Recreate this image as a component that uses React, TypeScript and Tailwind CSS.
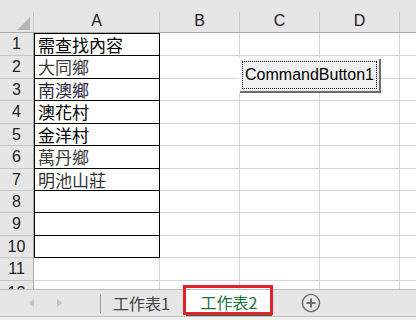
import React from "react";

const rowHeights = [23, 23, 22, 23, 22, 23, 22, 22, 23, 22, 23];
const cellText: Record<number, { t: string; c: string }> = {
  1: { t: "需查找內容", c: "text-[#000]" },
  2: { t: "大同鄉", c: "text-[#3a3a3a]" },
  3: { t: "南澳鄉", c: "text-[#2a2440]" },
  4: { t: "澳花村", c: "text-[#000]" },
  5: { t: "金洋村", c: "text-[#000]" },
  6: { t: "萬丹鄉", c: "text-[#3a3a3a]" },
  7: { t: "明池山莊", c: "text-[#333]" },
};

const cjk = { fontFamily: '"Noto Sans CJK TC", "Noto Sans", sans-serif' };
const lat = { fontFamily: '"Liberation Sans", Arial, sans-serif' };

function Row({ n, h }: { n: number; h: number }) {
  const inA = n <= 10;
  const txt = cellText[n];
  return (
    <div className="flex" style={{ height: h }}>
      <div
        className="w-[34px] shrink-0 bg-[#e6e6e6] border-r border-b border-r-[#ababab] border-b-[#c6c6c6] flex items-center justify-center text-[16px] leading-[18px] text-[#222]"
        style={lat}
      >
        {n}
      </div>
      <div
        className={
          "w-[126px] shrink-0 border-b border-r box-border flex items-center pl-[3px] text-[17px] leading-[18px] " +
          (inA
            ? "border-l border-black border-r-black border-b-black " + (n === 1 ? "border-t border-t-black " : "")
            : "border-l border-l-white border-b-[#d4d4d4] border-r-[#d4d4d4]")
        }
        style={cjk}
      >
        {txt ? <span className={txt.c + " leading-[18px]"}>{txt.t}</span> : null}
      </div>
      <div className="w-[80px] shrink-0 border-r border-b border-[#d4d4d4]" />
      <div className="w-[80px] shrink-0 border-r border-b border-[#d4d4d4]" />
      <div className="w-[80px] shrink-0 border-r border-b border-[#d4d4d4]" />
      <div className="flex-1 border-b border-[#d4d4d4]" />
    </div>
  );
}

export default function App() {
  return (
    <div className="w-[416px] h-[320px] overflow-hidden bg-white relative select-none">
      {/* column header */}
      <div className="flex h-[33px] bg-[#e6e6e6] border-b border-[#ababab]">
        <div className="w-[34px] shrink-0 flex flex-col">
          <div className="h-[12px]" />
          <div className="flex-1 border-r border-[#c6c6c6] relative">
            <svg width="14" height="14" className="absolute left-[17px] top-[5px]">
              <polygon points="13,0 13,13 0,13" fill="#b6b6b6" />
            </svg>
          </div>
        </div>
        {[
          ["A", 126],
          ["B", 80],
          ["C", 80],
          ["D", 80],
        ].map(([l, w]) => (
          <div key={l as string} className="shrink-0 flex flex-col" style={{ width: w as number }}>
            <div className="h-[12px]" />
            <div
              className="flex-1 border-r border-[#c6c6c6] flex items-center justify-center text-[16px] leading-[18px] text-[#222] pb-[2px]"
              style={lat}
            >
              {l}
            </div>
          </div>
        ))}
        <div className="flex-1" />
      </div>

      {/* rows */}
      {rowHeights.map((h, i) => (
        <Row key={i} n={i + 1} h={h} />
      ))}

      {/* partial row 12 */}
      <div className="flex h-[8px] overflow-hidden">
        <div
          className="w-[34px] shrink-0 bg-[#e6e6e6] border-r border-[#ababab] flex justify-center items-start text-[16px] text-[#222] leading-none pt-[4px]"
          style={lat}
        >
          12
        </div>
        <div className="w-[126px] shrink-0 border-r border-[#d4d4d4]" />
        <div className="w-[80px] shrink-0 border-r border-[#d4d4d4]" />
        <div className="w-[80px] shrink-0 border-r border-[#d4d4d4]" />
        <div className="w-[80px] shrink-0 border-r border-[#d4d4d4]" />
      </div>

      {/* sheet tab bar */}
      <div className="h-[28px] bg-[#e6e6e6] border-t border-b border-[#bdbdbd] flex items-center">
        <div className="w-[100px] shrink-0 flex items-center">
          <svg width="8" height="10" className="ml-[28px]">
            <polygon points="6,1 1,5 6,9" fill="#c4c4c4" />
          </svg>
          <svg width="8" height="10" className="ml-[19px]">
            <polygon points="2,1 7,5 2,9" fill="#c4c4c4" />
          </svg>
        </div>
        <div className="w-px h-[19px] bg-[#9a9a9a] shrink-0" />
        <div className="w-[85px] shrink-0 pl-[12px] text-[16px] text-[#444]" style={cjk}>
          工作表1
        </div>
        <div className="w-[86px] h-full shrink-0 bg-white border-b-2 border-[#217346] flex items-center justify-center text-[16px] text-[#217346]" style={cjk}>
          工作表2
        </div>
        <div className="ml-[29px]">
          <svg width="20" height="20" viewBox="0 0 20 20">
            <circle cx="10" cy="10" r="8.6" fill="none" stroke="#6b6b6b" strokeWidth="1.4" />
            <line x1="10" y1="5.5" x2="10" y2="14.5" stroke="#6b6b6b" strokeWidth="2" />
            <line x1="5.5" y1="10" x2="14.5" y2="10" stroke="#6b6b6b" strokeWidth="2" />
          </svg>
        </div>
      </div>
      <div className="h-[3px] bg-[#f0f0f0]" />

      {/* red annotation box over active tab */}
      <div className="absolute left-[183px] top-[285px] w-[90px] h-[30px] border-[3px] border-[#e8202a]" />

      {/* CommandButton1 */}
      <div className="absolute left-[239px] top-[58px] w-[142px] h-[35px] bg-[#f0f0f0] border-t border-l border-t-white border-l-white shadow-[inset_-2px_-2px_0_#696969]">
        <div className="absolute left-[2px] top-[2px] right-[4px] bottom-[4px] border border-dotted border-black flex items-center justify-center text-[16px] text-black" style={lat}>
          CommandButton1
        </div>
      </div>
    </div>
  );
}
